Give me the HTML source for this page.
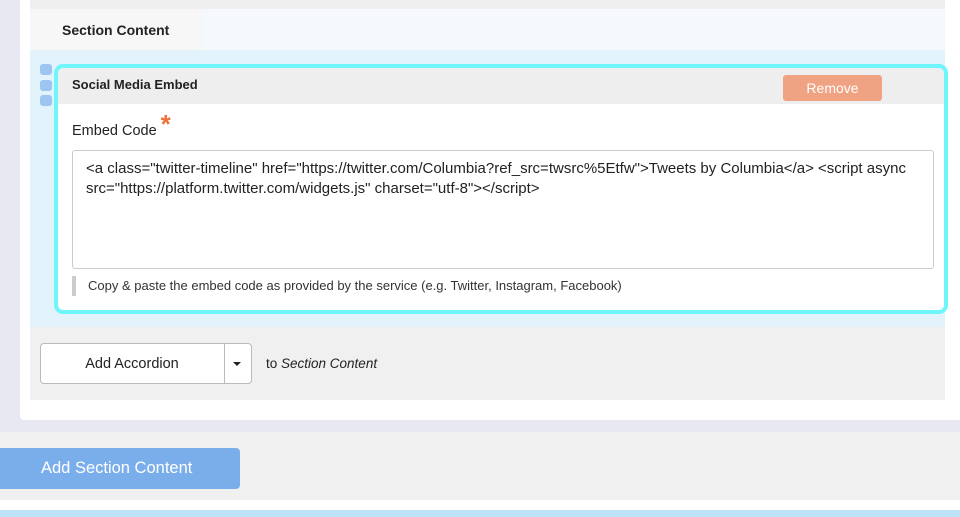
<!DOCTYPE html>
<html><head><style>
*{box-sizing:border-box;margin:0;padding:0}
body{width:960px;height:517px;overflow:hidden;background:#e8e8f3;font-family:"Liberation Sans",sans-serif;color:#222;position:relative}
.abs{position:absolute}
</style></head><body>
<div class="abs" style="left:20px;top:0;width:940px;height:420px;background:#fff;border-radius:0 0 0 4px"></div>
<div class="abs" style="left:30px;top:0;width:915px;height:9px;background:#efefef"></div>
<div class="abs" style="left:30px;top:9px;width:915px;height:41px;background:#f5f9fd"></div>
<div class="abs" style="left:30px;top:9px;width:173px;height:41px;background:#f7f7f7;font-size:14px;font-weight:bold;color:#222;padding:13px 0 0 32px">Section Content</div>
<div class="abs" style="left:30px;top:50px;width:915px;height:277px;background:#e3f3fb"></div>
<div class="abs" style="left:40px;top:64px;width:12px;height:11px;background:#9cc5f2;border-radius:3px"></div>
<div class="abs" style="left:40px;top:80px;width:12px;height:11px;background:#9cc5f2;border-radius:3px"></div>
<div class="abs" style="left:40px;top:95px;width:12px;height:11px;background:#9cc5f2;border-radius:3px"></div>
<div class="abs" style="left:54px;top:64px;width:894px;height:250px;border:4px solid #6ef6fb;border-radius:9px;background:#fff;overflow:hidden">
 <div style="height:36px;background:#eee;font-size:13px;font-weight:bold;padding:9px 0 0 14px">Social Media Embed</div>
 <div class="abs" style="left:725px;top:7px;width:99px;height:26px;background:#f0a383;border-radius:3px;color:#fff;font-size:14px;text-align:center;line-height:26px">Remove</div>
 <div class="abs" style="left:14px;top:53px;font-size:14.5px">Embed Code <span style="color:#f0703a;font-size:26px;font-weight:bold;position:relative;top:-2px;line-height:10px">*</span></div>
 <div class="abs" style="left:14px;top:82px;width:862px;height:119px;border:1px solid #ccc;border-radius:3px;padding:8px 13px;font-size:15px;line-height:20px;color:#222">&lt;a class="twitter-timeline" href="https://twitter.com/Columbia?ref_src=twsrc%5Etfw"&gt;Tweets by Columbia&lt;/a&gt; &lt;script async src="https://platform.twitter.com/widgets.js" charset="utf-8"&gt;&lt;/script&gt;</div>
 <div class="abs" style="left:14px;top:208px;width:4px;height:20px;background:#ccc"></div>
 <div class="abs" style="left:30px;top:210px;font-size:13px;color:#333">Copy &amp; paste the embed code as provided by the service (e.g. Twitter, Instagram, Facebook)</div>
</div>
<div class="abs" style="left:30px;top:327px;width:915px;height:73px;background:#f0f0f0"></div>
<div class="abs" style="left:40px;top:343px;width:212px;height:41px;background:#fff;border:1px solid #bbb;border-radius:4px"></div>
<div class="abs" style="left:224px;top:343px;width:1px;height:41px;background:#bbb"></div>
<div class="abs" style="left:40px;top:356px;width:184px;text-align:center;font-size:14.5px">Add Accordion</div>
<div class="abs" style="left:233px;top:362px;width:0;height:0;border-left:4px solid transparent;border-right:4px solid transparent;border-top:4px solid #222"></div>
<div class="abs" style="left:266px;top:356px;font-size:13.5px">to <i>Section Content</i></div>
<div class="abs" style="left:0;top:432px;width:960px;height:68px;background:#f0f0f0"></div>
<div class="abs" style="left:0;top:448px;width:240px;height:41px;background:#7aaeea;border-radius:0 4px 4px 0;color:#fff;font-size:16.5px;padding:11px 0 0 41px">Add Section Content</div>
<div class="abs" style="left:0;top:500px;width:960px;height:10px;background:#fff"></div>
<div class="abs" style="left:0;top:510px;width:960px;height:7px;background:#bde3f7"></div>
</body></html>
